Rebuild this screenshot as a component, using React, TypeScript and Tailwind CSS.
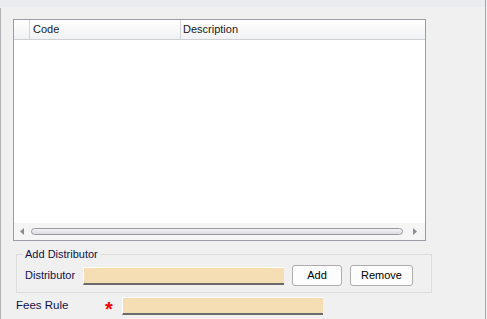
import React from "react";

export default function App() {
  const font = { fontFamily: '"Liberation Sans", Arial, sans-serif' };
  return (
    <div
      className="relative w-[487px] h-[319px] bg-[#f0f0f0] overflow-hidden text-[11px] text-black"
      style={font}
    >
      {/* left and right edges */}
      <div className="absolute left-0 top-[8px] bottom-0 w-px bg-[#b4b4b8]" />
      <div className="absolute right-[1px] top-0 bottom-0 w-px bg-[#a8a8ac]" />
      <div className="h-[7px] bg-[#eaebef]" />
      <div className="pl-[13px] pt-[12px]">
        {/* grid */}
        <div className="w-[413px] h-[222px] border border-[#9c9ca4] bg-white flex flex-col">
          <div className="h-[20px] flex border-b border-[#cfd0d4] bg-gradient-to-b from-white to-[#f1f2f4]">
            <div className="w-[16px] border-r border-[#d5d5d8]" />
            <div className="w-[151px] border-r border-[#d5d5d8] pl-[3px] leading-[19px] text-[#1a1a1a]">
              Code
            </div>
            <div className="flex-1 pl-[2px] leading-[19px] text-[#1a1a1a]">Description</div>
          </div>
          <div className="flex-1" />
          <div className="h-[17px] bg-[#f5f5f5] flex items-center">
            <div className="w-[17px] flex items-center justify-center">
              <svg width="5" height="7" viewBox="0 0 5 7">
                <path d="M4 0 L0 3.5 L4 7 Z" fill="#8c8c94" />
              </svg>
            </div>
            <div className="flex-1 h-[7px] rounded-full border border-[#9a9aa2] bg-gradient-to-b from-[#f4f4f6] to-[#dcdce0]" />
            <div className="w-[22px] flex items-center justify-center">
              <svg width="5" height="7" viewBox="0 0 5 7">
                <path d="M1 0 L5 3.5 L1 7 Z" fill="#8c8c94" />
              </svg>
            </div>
          </div>
        </div>
      </div>
      {/* group box */}
      <div className="ml-[16px] mt-[13px] w-[416px] h-[39px] border border-[#dcdcdc] relative">
        <div className="absolute left-[6px] top-[-8px] px-[2px] bg-[#f0f0f0] leading-[14px] text-[#10104a]">
          Add Distributor
        </div>
        <div className="flex items-center pt-[10px] pl-[8px]">
          <div className="w-[58px] text-[#10104a]">Distributor</div>
          <div className="w-[201px] h-[18px] bg-[#f5deb3] border-t border-l border-white border-b-2 border-b-[#6b6b6b] box-border" />
          <button className="ml-[8px] w-[50px] h-[21px] rounded-[3px] border border-[#adadad] bg-[#fdfdfd] text-[11px] text-black">
            Add
          </button>
          <button className="ml-[8px] w-[63px] h-[21px] rounded-[3px] border border-[#adadad] bg-[#fdfdfd] text-[11px] text-black">
            Remove
          </button>
        </div>
      </div>
      <div className="flex items-center ml-[16px] mt-[4px]">
        <div className="w-[89px] text-[11.5px] text-[#10104a]">Fees Rule</div>
        <div className="w-[17px] text-[#ff0000] font-bold text-[20px] leading-[12px] pt-[6px]">*</div>
        <div className="w-[201px] h-[18px] bg-[#f5deb3] border-t border-l border-white border-b-2 border-b-[#6b6b6b] box-border" />
      </div>
    </div>
  );
}
